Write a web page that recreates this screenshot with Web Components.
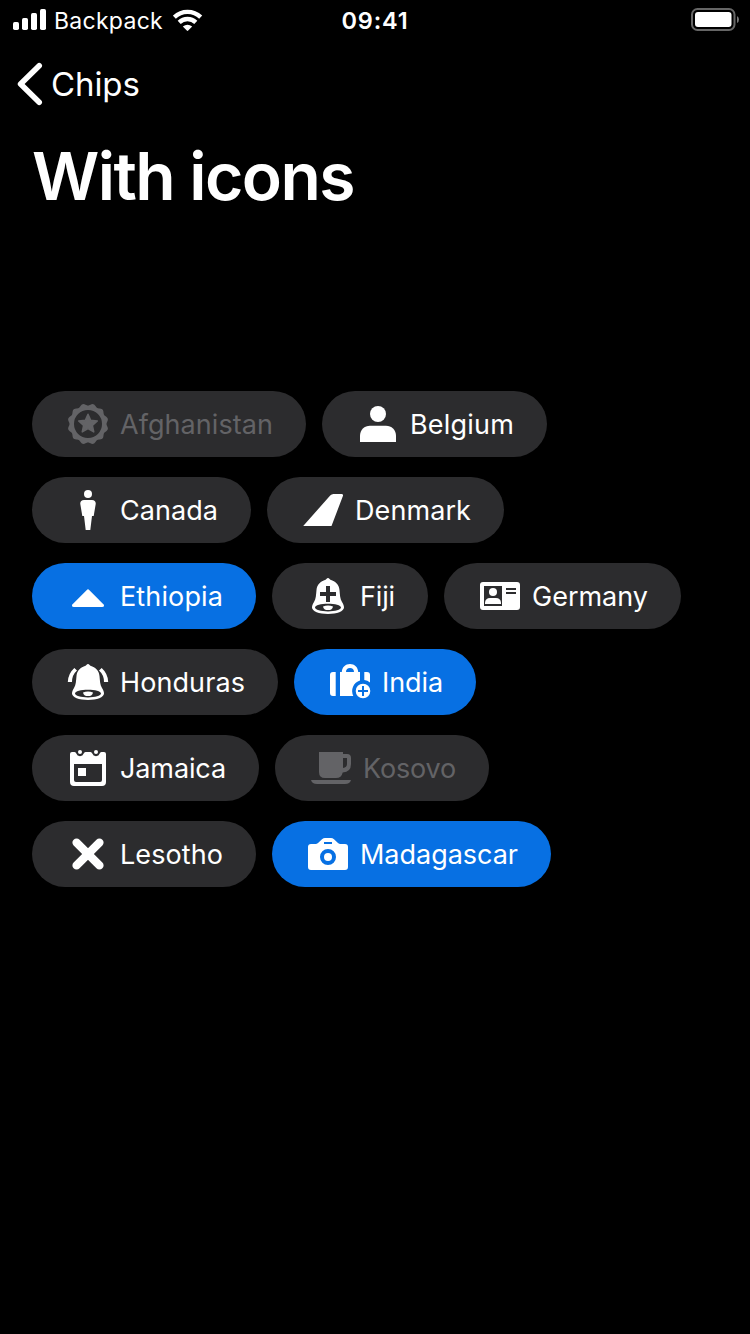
<!DOCTYPE html>
<html lang="en">
<head>
<meta charset="utf-8">
<title>With icons</title>
<style>
html,body{margin:0;background:#000;color:#fff;font-family:Inter,"Liberation Sans",sans-serif}
</style>
</head>
<body>
<chips-screen></chips-screen>
<script>
const define = (name, cls) => customElements.define(name, cls);

// Text run whose tracking is adjusted to fill the given width.
define('fit-text', class extends HTMLElement {
  connectedCallback() {
    const root = this.attachShadow({mode: 'open'});
    root.innerHTML = `<style>:host{display:block;white-space:nowrap}span{display:inline-block}</style><span><slot></slot></span>`;
    const span = root.querySelector('span');
    const width = Number(this.getAttribute('width'));
    const n = this.textContent.length;
    const natural = span.getBoundingClientRect().width;
    this.style.width = width + 'px';
    span.style.letterSpacing = ((width - natural) / n).toFixed(3) + 'px';
  }
});

const scallop = (() => {
  let d = '';
  const n = 12;
  for (let i = 0; i <= 144; i++) {
    const a = i / 144 * Math.PI * 2;
    const r = 19.5 + 1 * Math.cos(n * a + Math.PI);
    d += (i ? 'L' : 'M') + (24 + r * Math.sin(a)).toFixed(2) + ' ' + (24 - r * Math.cos(a)).toFixed(2);
  }
  return d + 'Z';
})();
const star = Array.from({length: 10}, (_, i) => {
  const a = i * Math.PI / 5, r = i % 2 ? 4.6 : 9.8;
  return (24 + r * Math.sin(a)).toFixed(2) + ' ' + (24 - r * Math.cos(a)).toFixed(2);
}).join('L');
const bell = 'M24 6C25.2 6 25.6 7.2 26.4 7.8C31.600 9.200 35 12.800 35.500 18C36 23 36 27 38 30C39.4 32 40 34 40 35.6C40 39.4 33 42 24 42S8 39.4 8 35.6C8 34 8.6 32 10 30C12 27 12 23 12.5 18C13 12.8 16.4 9.2 21.600 7.8C22.4 7.2 22.8 6 24 6Z';
const mouth = 'M24 31.800C31 31.800 37 33.300 37 35.500S31 39.400 24 39.400S11 37.700 11 35.500S17 31.800 24 31.800Z';
const clapper = '<path d="M19 34.400Q24 32.800 29 34.400Q28.500 38 24 38T19 34.400Z"/>';
const icons = {
  award: `<path fill-rule="evenodd" d="${scallop}M24 10a14 14 0 1 0 0 28a14 14 0 1 0 0-28Z"/><path stroke="currentColor" stroke-width="1.500" stroke-linejoin="round" d="M${star}Z"/>`,
  account: `<circle cx="24" cy="14" r="8"/><path d="M6 42V36C6 29.500 10.500 25.700 16 25.700H32C37.500 25.700 42 29.500 42 36V42Z"/>`,
  adult: `<circle cx="24" cy="8" r="4"/><path d="M20 14H28C30.500 14 32 15.800 31.700 18L29.700 30H28L26.300 44H21.700L20 30H18.300L16.300 18C16 15.800 17.500 14 20 14Z"/>`,
  tail: `<path d="M4.200 40L31.200 9.500Q32.500 8 34.500 8H42.500Q44.500 8 43.900 10L32.500 40Z"/>`,
  up: `<path d="M22.800 17.900Q24 16.800 25.200 17.900L39.400 32.200C40.800 33.700 39.800 35 38.200 35H9.800C8.200 35 7.200 33.700 8.600 32.200Z"/>`,
  alert: `<path fill-rule="evenodd" d="${bell}${mouth}M22 14V20H16V24H22V30H26V24H32V20H26V14Z"/>${clapper}`,
  card: `<path fill-rule="evenodd" d="M7 10H41Q44 10 44 13V35Q44 38 41 38H7Q4 38 4 35V13Q4 10 7 10ZM8 14V34H26V14ZM30 16V18H40V16ZM30 20V22H40V20Z"/><circle cx="17" cy="20" r="4"/><path d="M9 32V30.500Q9.500 26 14 26H20Q24.500 26 25 30.500V32Z"/>`,
  ring: `<path fill-rule="evenodd" d="${bell}${mouth}"/>${clapper}<path d="M10.300 10L13 12.600Q8 17 8 24H3.800Q4 15.800 10.300 10ZM37.700 10L35 12.600Q40 17 40 24H44.200Q44 15.800 37.700 10Z"/>`,
  bags: `<path d="M9.700 14V38H7Q4 38 4 35V17Q4 14 7 14ZM38.300 14H41Q44 14 44 17V24.500Q41.500 22.500 38.300 22.100Z"/><path fill-rule="evenodd" d="M14 14H15.800C16 9 19.500 6 24 6S32 9 32.200 14H34V22.500A11 11 0 0 0 27.300 38H14ZM20 14H28C28 11.500 26.500 10 24 10S20 11.500 20 14Z"/><path fill-rule="evenodd" d="M37 25.700a7.300 7.300 0 1 0 0 14.600a7.300 7.300 0 1 0 0-14.600ZM36 28V32H32V34H36V38H38V34H42V32H38V28Z"/>`,
  calendar: `<path fill-rule="evenodd" d="M8 8H10.500Q12 8 12.300 9.500A3.900 3.900 0 0 0 19.700 9.500Q20.200 8 21.500 8H26.500Q27.800 8 28.300 9.500A3.900 3.900 0 0 0 35.700 9.500Q36 8 37.500 8H40Q42 8 42 10V38Q42 42 38 42H10Q6 42 6 38V10Q6 8 8 8ZM10 20V36Q10 38 12 38H36Q38 38 38 36V20Z"/><circle cx="16" cy="8" r="2"/><circle cx="32" cy="8" r="2"/><rect x="14" y="24" width="8" height="8"/>`,
  cup: `<path fill-rule="evenodd" d="M12 8H36V10H40Q44 10 44 14V20Q44 28 35.700 28.500Q34.500 34 29 34H18Q12 34 12 28ZM36 14V24Q40 23.500 40 20V14Z"/><path d="M4 36H44Q43 40 38 40H10Q5 40 4 36Z"/>`,
  close: `<path fill="none" stroke="currentColor" stroke-width="8.400" stroke-linecap="round" d="M12.600 12.600L35.400 35.400M35.400 12.600L12.600 35.400"/>`,
  camera: `<path fill-rule="evenodd" d="M7 14H11.500Q13 14 14 13L18 9.200Q19.500 8 21 8H27Q28.500 8 30 9.200L34 13Q35 14 36.500 14H41Q44 14 44 17V37Q44 40 41 40H7Q4 40 4 37V17Q4 14 7 14ZM20 12V14H28V12ZM24 19a8 8 0 1 0 0 16a8 8 0 1 0 0-16Z"/><circle cx="24" cy="27" r="4"/>`
};

define('bpk-icon', class extends HTMLElement {
  connectedCallback() {
    this.attachShadow({mode: 'open'}).innerHTML = `<style>:host{display:block;width:48px;height:48px}svg{display:block}</style>
      <svg width="48" height="48" viewBox="0 0 48 48" fill="currentColor">${icons[this.getAttribute('name')]}</svg>`;
  }
});

define('bpk-chip', class extends HTMLElement {
  connectedCallback() {
    this.attachShadow({mode: 'open'}).innerHTML = `<style>
      :host{display:flex;align-items:center;gap:8px;box-sizing:border-box;height:66px;padding:0 33px 0 32px;border-radius:33px;background:#2c2c2e;color:#fff;font-size:27px;line-height:33px}
      :host([selected]){background:#0770e3}
      :host([disabled]){color:#636366}
      </style><bpk-icon name="${this.getAttribute('icon')}"></bpk-icon><slot></slot>`;
  }
});

define('status-bar', class extends HTMLElement {
  connectedCallback() {
    this.attachShadow({mode: 'open'}).innerHTML = `<style>
      :host{display:grid;grid-template-columns:1fr auto 1fr;height:40px;align-items:center;padding:0 10px 0 13px;font-size:23px;line-height:28px}
      .left{display:flex;align-items:center}svg{display:block}
      .carrier{margin-left:8px;padding-top:1px}.wifi{margin-left:10px}
      .time{font-size:23.5px;font-weight:600;padding-top:1px;margin-left:-3px}.battery{justify-self:end}
      </style>
      <div class="left">
        <svg width="33" height="40" fill="#fff"><rect y="22" width="6" height="8" rx="1.700"/><rect x="9" y="18" width="6" height="12" rx="1.700"/><rect x="18" y="13" width="6" height="17" rx="1.700"/><rect x="27" y="9" width="6" height="21" rx="1.700"/></svg>
        <fit-text class="carrier" width="109">Backpack</fit-text>
        <svg class="wifi" width="30" height="40" viewBox="173 0 30 40" fill="none" stroke="#fff" stroke-width="4.400"><path d="M174.300 17.200A19 19 0 0 1 200.700 17.200"/><path d="M179.200 22.400A12 12 0 0 1 195.800 22.400"/><path fill="#fff" stroke="none" d="M182.800 26.600Q187.500 22.800 192.200 26.600L188.200 30.600Q187.500 31.200 186.800 30.600Z"/></svg>
      </div>
      <fit-text class="time" width="67">09:41</fit-text>
      <svg class="battery" width="50" height="40" viewBox="690 0 50 40"><rect x="692" y="9" width="42.500" height="21" rx="5.500" fill="none" stroke="#666" stroke-width="2"/><rect x="695" y="12" width="36.500" height="15" rx="3" fill="#fff"/><path d="M737 16Q739 17 739 19.500T737 23Z" fill="#777"/></svg>`;
  }
});

define('nav-back', class extends HTMLElement {
  connectedCallback() {
    this.attachShadow({mode: 'open'}).innerHTML = `<style>
      :host{display:flex;align-items:center;height:88px;padding-left:16px;font-size:33px;line-height:40px;letter-spacing:-.1px}
      svg{display:block;margin-right:7px}</style>
      <svg width="28" height="48" fill="none" stroke="#fff" stroke-width="5.600" stroke-linecap="round" stroke-linejoin="round"><path d="M23.200 5.700L4.600 24L23.200 42.300"/></svg>
      <slot></slot>`;
  }
});

define('chip-row', class extends HTMLElement {
  connectedCallback() {
    this.attachShadow({mode: 'open'}).innerHTML = `<style>:host{display:flex;gap:16px}</style><slot></slot>`;
  }
});

const rows = [
  [['award', 'Afghanistan', 153, 'disabled'], ['account', 'Belgium', 104]],
  [['adult', 'Canada', 98], ['tail', 'Denmark', 116]],
  [['up', 'Ethiopia', 103, 'selected'], ['alert', 'Fiji', 35], ['card', 'Germany', 116]],
  [['ring', 'Honduras', 125], ['bags', 'India', 61, 'selected']],
  [['calendar', 'Jamaica', 106], ['cup', 'Kosovo', 93, 'disabled']],
  [['close', 'Lesotho', 103], ['camera', 'Madagascar', 158, 'selected']]
];

define('chips-screen', class extends HTMLElement {
  connectedCallback() {
    this.attachShadow({mode: 'open'}).innerHTML = `<style>
      :host{display:block;height:1334px;overflow:hidden;background:#000}
      h1{margin:0;padding-left:32px;height:96px;font-size:66px;line-height:96px;font-weight:600}
      main{display:flex;flex-direction:column;gap:20px;padding:167px 32px 0}
      </style>
      <status-bar></status-bar>
      <nav-back>Chips</nav-back>
      <h1><fit-text width="322">With icons</fit-text></h1>
      <main>${rows.map(r => `<chip-row>${r.map(([icon, label, w, state = '']) =>
        `<bpk-chip icon="${icon}" ${state}><fit-text width="${w}">${label}</fit-text></bpk-chip>`).join('')}</chip-row>`).join('')}</main>`;
  }
});
</script>
</body>
</html>
